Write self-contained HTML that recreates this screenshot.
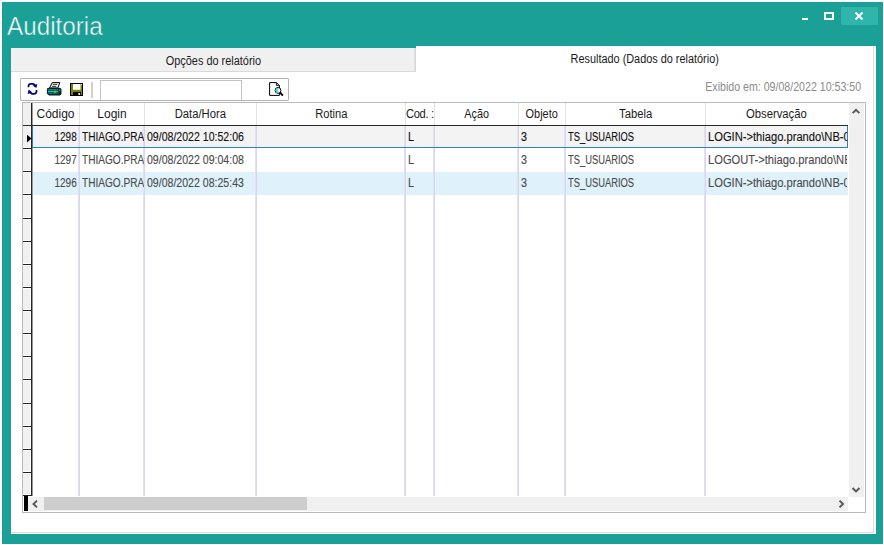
<!DOCTYPE html>
<html><head><meta charset="utf-8"><style>
html,body{margin:0;padding:0;width:884px;height:545px;overflow:hidden;background:#fff;position:relative}
.b,.t{position:absolute;font-family:"Liberation Sans", sans-serif;white-space:nowrap}
.g{-webkit-text-stroke:0.12px currentColor}
</style></head><body>
<div style="position:absolute;left:2px;top:2px;width:881px;height:542px;background:#1ba098"></div>
<div class="b " style="left:7px;top:12px;font-size:25px;line-height:28px;color:#fff;-webkit-text-stroke:0.5px #1ba098;transform:translateY(-0.3px)"><span style="display:inline-block;transform:scaleX(0.97);transform-origin:0 0">Auditoria</span></div>
<div style="position:absolute;left:841px;top:7px;width:37px;height:18px;background:#30b5ad"></div>
<svg style="position:absolute;left:0;top:0" width="884" height="40"><path d="M855.5 12.5 L862.5 19.5 M862.5 12.5 L855.5 19.5" stroke="#fff" stroke-width="2" fill="none"/><rect x="825" y="13" width="8" height="6" stroke="#fff" stroke-width="2" fill="none"/><rect x="802" y="18" width="6" height="2" fill="#fff"/></svg>
<div style="position:absolute;left:11px;top:48px;width:865px;height:486px;background:#fff"></div>
<div style="position:absolute;left:416px;top:46px;width:460px;height:2px;background:#fff"></div>
<div style="position:absolute;left:873px;top:46px;width:1px;height:487px;background:#e2dede"></div>
<div style="position:absolute;left:11px;top:532px;width:863px;height:1px;background:#e2dede"></div>
<div style="position:absolute;left:11px;top:48px;width:404px;height:23px;background:#f0f0f0;border-right:1px solid #d6d6d6;border-bottom:1px solid #d9d9d9"></div>
<div style="position:absolute;left:414px;top:48px;width:1px;height:23px;background:#e4e4e4"></div>
<div class="b " style="left:11px;width:405px;text-align:center;top:53px;overflow:hidden;font-size:12px;line-height:16px;color:#1a1a1a;"><span style="display:inline-block;transform:scaleX(0.91);transform-origin:50% 0">Opções do relatório</span></div>
<div class="b " style="left:416px;width:458px;text-align:center;top:51px;overflow:hidden;font-size:12px;line-height:16px;color:#1a1a1a;"><span style="display:inline-block;transform:scaleX(0.907);transform-origin:50% 0">Resultado (Dados do relatório)</span></div>
<div style="position:absolute;left:20px;top:78px;width:267px;height:21px;border:1px solid #b3b3b3;border-radius:1px;background:#fff"></div>
<div style="position:absolute;left:100px;top:80px;width:140px;height:19px;border-left:1px solid #c2c2c8;border-top:1px solid #c2c2c8;border-right:1px solid #c2c2c8"></div>
<div class="b " style="left:561px;width:300px;text-align:right;top:79px;font-size:12px;line-height:16px;color:#8a8a8a;"><span style="display:inline-block;transform:scaleX(0.885);transform-origin:100% 0">Exibido em: 09/08/2022 10:53:50</span></div>
<div style="position:absolute;left:22px;top:102px;width:842px;height:409px;border:1px solid #b9b9c0;background:#fff"></div>
<div style="position:absolute;left:23px;top:103px;width:8px;height:393px;background:#f0f0f0"></div>
<div style="position:absolute;left:79px;top:103px;width:1px;height:22px;background:#e3e3e3"></div>
<div style="position:absolute;left:144px;top:103px;width:1px;height:22px;background:#e3e3e3"></div>
<div style="position:absolute;left:256px;top:103px;width:1px;height:22px;background:#e3e3e3"></div>
<div style="position:absolute;left:405px;top:103px;width:1px;height:22px;background:#e3e3e3"></div>
<div style="position:absolute;left:434px;top:103px;width:1px;height:22px;background:#e3e3e3"></div>
<div style="position:absolute;left:518px;top:103px;width:1px;height:22px;background:#e3e3e3"></div>
<div style="position:absolute;left:565px;top:103px;width:1px;height:22px;background:#e3e3e3"></div>
<div style="position:absolute;left:705px;top:103px;width:1px;height:22px;background:#e3e3e3"></div>
<div style="position:absolute;left:79px;top:126px;width:1px;height:370px;background:#d8d2f0"></div>
<div style="position:absolute;left:144px;top:126px;width:1px;height:370px;background:#d8d2f0"></div>
<div style="position:absolute;left:256px;top:126px;width:1px;height:370px;background:#d8d2f0"></div>
<div style="position:absolute;left:405px;top:126px;width:1px;height:370px;background:#d8d2f0"></div>
<div style="position:absolute;left:434px;top:126px;width:1px;height:370px;background:#d8d2f0"></div>
<div style="position:absolute;left:518px;top:126px;width:1px;height:370px;background:#d8d2f0"></div>
<div style="position:absolute;left:565px;top:126px;width:1px;height:370px;background:#d8d2f0"></div>
<div style="position:absolute;left:705px;top:126px;width:1px;height:370px;background:#d8d2f0"></div>
<div style="position:absolute;left:31px;top:103px;width:1px;height:393px;background:#262626"></div>
<div style="position:absolute;left:32px;top:103px;width:1px;height:393px;background:#9a9a9a"></div>
<div style="position:absolute;left:30px;top:126px;width:1px;height:370px;background:#fff"></div>
<div style="position:absolute;left:23px;top:125px;width:825px;height:1px;background:#2a2a2a"></div>
<div style="position:absolute;left:32px;top:126px;width:816px;height:22px;background:#f3f3f3"></div>
<div style="position:absolute;left:33px;top:172px;width:815px;height:23px;background:#dff2fb"></div>
<div style="position:absolute;left:78px;top:126px;width:1px;height:370px;background:#e4e0f3"></div>
<div style="position:absolute;left:79px;top:126px;width:1px;height:370px;background:#d9d4ef"></div>
<div style="position:absolute;left:143px;top:126px;width:1px;height:370px;background:#e4e0f3"></div>
<div style="position:absolute;left:144px;top:126px;width:1px;height:370px;background:#d9d4ef"></div>
<div style="position:absolute;left:255px;top:126px;width:1px;height:370px;background:#e4e0f3"></div>
<div style="position:absolute;left:256px;top:126px;width:1px;height:370px;background:#d9d4ef"></div>
<div style="position:absolute;left:404px;top:126px;width:1px;height:370px;background:#e4e0f3"></div>
<div style="position:absolute;left:405px;top:126px;width:1px;height:370px;background:#d9d4ef"></div>
<div style="position:absolute;left:433px;top:126px;width:1px;height:370px;background:#e4e0f3"></div>
<div style="position:absolute;left:434px;top:126px;width:1px;height:370px;background:#d9d4ef"></div>
<div style="position:absolute;left:517px;top:126px;width:1px;height:370px;background:#e4e0f3"></div>
<div style="position:absolute;left:518px;top:126px;width:1px;height:370px;background:#d9d4ef"></div>
<div style="position:absolute;left:564px;top:126px;width:1px;height:370px;background:#e4e0f3"></div>
<div style="position:absolute;left:565px;top:126px;width:1px;height:370px;background:#d9d4ef"></div>
<div style="position:absolute;left:704px;top:126px;width:1px;height:370px;background:#e4e0f3"></div>
<div style="position:absolute;left:705px;top:126px;width:1px;height:370px;background:#d9d4ef"></div>
<div style="position:absolute;left:32px;top:126px;width:815px;height:21px;border-left:1px solid #2b7fd6;border-right:1px solid #2b7fd6;border-bottom:1px solid #2b7fd6;width:814px"></div>
<div style="position:absolute;left:23px;top:147px;width:7px;height:1px;background:#fff"></div>
<div style="position:absolute;left:23px;top:148px;width:8px;height:1px;background:#222"></div>
<div style="position:absolute;left:23px;top:149px;width:7px;height:1px;background:#fff"></div>
<div style="position:absolute;left:23px;top:170px;width:7px;height:1px;background:#fff"></div>
<div style="position:absolute;left:23px;top:171px;width:8px;height:1px;background:#222"></div>
<div style="position:absolute;left:23px;top:172px;width:7px;height:1px;background:#fff"></div>
<div style="position:absolute;left:23px;top:193px;width:7px;height:1px;background:#fff"></div>
<div style="position:absolute;left:23px;top:194px;width:8px;height:1px;background:#222"></div>
<div style="position:absolute;left:23px;top:195px;width:7px;height:1px;background:#fff"></div>
<div style="position:absolute;left:23px;top:217px;width:7px;height:1px;background:#fff"></div>
<div style="position:absolute;left:23px;top:218px;width:8px;height:1px;background:#222"></div>
<div style="position:absolute;left:23px;top:219px;width:7px;height:1px;background:#fff"></div>
<div style="position:absolute;left:23px;top:240px;width:7px;height:1px;background:#fff"></div>
<div style="position:absolute;left:23px;top:241px;width:8px;height:1px;background:#222"></div>
<div style="position:absolute;left:23px;top:242px;width:7px;height:1px;background:#fff"></div>
<div style="position:absolute;left:23px;top:263px;width:7px;height:1px;background:#fff"></div>
<div style="position:absolute;left:23px;top:264px;width:8px;height:1px;background:#222"></div>
<div style="position:absolute;left:23px;top:265px;width:7px;height:1px;background:#fff"></div>
<div style="position:absolute;left:23px;top:286px;width:7px;height:1px;background:#fff"></div>
<div style="position:absolute;left:23px;top:287px;width:8px;height:1px;background:#222"></div>
<div style="position:absolute;left:23px;top:288px;width:7px;height:1px;background:#fff"></div>
<div style="position:absolute;left:23px;top:309px;width:7px;height:1px;background:#fff"></div>
<div style="position:absolute;left:23px;top:310px;width:8px;height:1px;background:#222"></div>
<div style="position:absolute;left:23px;top:311px;width:7px;height:1px;background:#fff"></div>
<div style="position:absolute;left:23px;top:332px;width:7px;height:1px;background:#fff"></div>
<div style="position:absolute;left:23px;top:333px;width:8px;height:1px;background:#222"></div>
<div style="position:absolute;left:23px;top:334px;width:7px;height:1px;background:#fff"></div>
<div style="position:absolute;left:23px;top:355px;width:7px;height:1px;background:#fff"></div>
<div style="position:absolute;left:23px;top:356px;width:8px;height:1px;background:#222"></div>
<div style="position:absolute;left:23px;top:357px;width:7px;height:1px;background:#fff"></div>
<div style="position:absolute;left:23px;top:378px;width:7px;height:1px;background:#fff"></div>
<div style="position:absolute;left:23px;top:379px;width:8px;height:1px;background:#222"></div>
<div style="position:absolute;left:23px;top:380px;width:7px;height:1px;background:#fff"></div>
<div style="position:absolute;left:23px;top:402px;width:7px;height:1px;background:#fff"></div>
<div style="position:absolute;left:23px;top:403px;width:8px;height:1px;background:#222"></div>
<div style="position:absolute;left:23px;top:404px;width:7px;height:1px;background:#fff"></div>
<div style="position:absolute;left:23px;top:425px;width:7px;height:1px;background:#fff"></div>
<div style="position:absolute;left:23px;top:426px;width:8px;height:1px;background:#222"></div>
<div style="position:absolute;left:23px;top:427px;width:7px;height:1px;background:#fff"></div>
<div style="position:absolute;left:23px;top:448px;width:7px;height:1px;background:#fff"></div>
<div style="position:absolute;left:23px;top:449px;width:8px;height:1px;background:#222"></div>
<div style="position:absolute;left:23px;top:450px;width:7px;height:1px;background:#fff"></div>
<div style="position:absolute;left:23px;top:471px;width:7px;height:1px;background:#fff"></div>
<div style="position:absolute;left:23px;top:472px;width:8px;height:1px;background:#222"></div>
<div style="position:absolute;left:23px;top:473px;width:7px;height:1px;background:#fff"></div>
<div style="position:absolute;left:23px;top:494px;width:7px;height:1px;background:#fff"></div>
<div style="position:absolute;left:23px;top:495px;width:8px;height:1px;background:#222"></div>
<div style="position:absolute;left:23px;top:496px;width:7px;height:1px;background:#fff"></div>
<svg style="position:absolute;left:26px;top:134px" width="7" height="10"><path d="M1 0.8 L5.6 4.6 L1 8.4 Z" fill="#000"/></svg>
<div class="b " style="left:32px;width:47px;text-align:center;top:106px;overflow:hidden;font-size:12px;line-height:16px;color:#1a1a1a;"><span style="display:inline-block;transform:scaleX(1.0);transform-origin:50% 0">Código</span></div>
<div class="b " style="left:80px;width:64px;text-align:center;top:106px;overflow:hidden;font-size:12px;line-height:16px;color:#1a1a1a;"><span style="display:inline-block;transform:scaleX(1.0);transform-origin:50% 0">Login</span></div>
<div class="b " style="left:145px;width:111px;text-align:center;top:106px;overflow:hidden;font-size:12px;line-height:16px;color:#1a1a1a;"><span style="display:inline-block;transform:scaleX(0.94);transform-origin:50% 0">Data/Hora</span></div>
<div class="b " style="left:257px;width:148px;text-align:center;top:106px;overflow:hidden;font-size:12px;line-height:16px;color:#1a1a1a;"><span style="display:inline-block;transform:scaleX(0.93);transform-origin:50% 0">Rotina</span></div>
<div class="b " style="left:435px;width:83px;text-align:center;top:106px;overflow:hidden;font-size:12px;line-height:16px;color:#1a1a1a;"><span style="display:inline-block;transform:scaleX(0.9);transform-origin:50% 0">Ação</span></div>
<div class="b " style="left:519px;width:46px;text-align:center;top:106px;overflow:hidden;font-size:12px;line-height:16px;color:#1a1a1a;"><span style="display:inline-block;transform:scaleX(0.91);transform-origin:50% 0">Objeto</span></div>
<div class="b " style="left:566px;width:139px;text-align:center;top:106px;overflow:hidden;font-size:12px;line-height:16px;color:#1a1a1a;"><span style="display:inline-block;transform:scaleX(0.94);transform-origin:50% 0">Tabela</span></div>
<div class="b " style="left:706px;width:141px;text-align:center;top:106px;overflow:hidden;font-size:12px;line-height:16px;color:#1a1a1a;"><span style="display:inline-block;transform:scaleX(0.94);transform-origin:50% 0">Observação</span></div>
<div class="b " style="left:406px;top:106px;width:28px;overflow:hidden;font-size:12px;line-height:16px;color:#1a1a1a;letter-spacing:-0.35px"><span style="display:inline-block;transform:scaleX(0.93);transform-origin:0 0">Cod. :</span></div>
<div class="b g" style="left:-223px;width:300px;text-align:right;top:129px;font-size:12px;line-height:16px;color:#111;"><span style="display:inline-block;transform:scaleX(0.83);transform-origin:100% 0">1298</span></div>
<div class="b g" style="left:82px;top:129px;width:62px;overflow:hidden;font-size:12px;line-height:16px;color:#111;"><span style="display:inline-block;transform:scaleX(0.84);transform-origin:0 0">THIAGO.PRANDO</span></div>
<div class="b g" style="left:147px;top:129px;width:109px;overflow:hidden;font-size:12px;line-height:16px;color:#111;"><span style="display:inline-block;transform:scaleX(0.88);transform-origin:0 0">09/08/2022 10:52:06</span></div>
<div class="b g" style="left:408px;top:129px;width:26px;overflow:hidden;font-size:12px;line-height:16px;color:#111;"><span style="display:inline-block;transform:scaleX(0.9);transform-origin:0 0">L</span></div>
<div class="b g" style="left:521px;top:129px;width:44px;overflow:hidden;font-size:12px;line-height:16px;color:#111;"><span style="display:inline-block;transform:scaleX(0.9);transform-origin:0 0">3</span></div>
<div class="b g" style="left:568px;top:129px;width:137px;overflow:hidden;font-size:12px;line-height:16px;color:#111;"><span style="display:inline-block;transform:scaleX(0.78);transform-origin:0 0">TS_USUARIOS</span></div>
<div class="b g" style="left:708px;top:129px;width:139px;overflow:hidden;font-size:12px;line-height:16px;color:#111;"><span style="display:inline-block;transform:scaleX(0.93);transform-origin:0 0">LOGIN->thiago.prando\NB-0001</span></div>
<div class="b g" style="left:-223px;width:300px;text-align:right;top:152px;font-size:12px;line-height:16px;color:#4a4a4a;"><span style="display:inline-block;transform:scaleX(0.83);transform-origin:100% 0">1297</span></div>
<div class="b g" style="left:82px;top:152px;width:62px;overflow:hidden;font-size:12px;line-height:16px;color:#4a4a4a;"><span style="display:inline-block;transform:scaleX(0.84);transform-origin:0 0">THIAGO.PRANDO</span></div>
<div class="b g" style="left:147px;top:152px;width:109px;overflow:hidden;font-size:12px;line-height:16px;color:#4a4a4a;"><span style="display:inline-block;transform:scaleX(0.88);transform-origin:0 0">09/08/2022 09:04:08</span></div>
<div class="b g" style="left:408px;top:152px;width:26px;overflow:hidden;font-size:12px;line-height:16px;color:#4a4a4a;"><span style="display:inline-block;transform:scaleX(0.9);transform-origin:0 0">L</span></div>
<div class="b g" style="left:521px;top:152px;width:44px;overflow:hidden;font-size:12px;line-height:16px;color:#4a4a4a;"><span style="display:inline-block;transform:scaleX(0.9);transform-origin:0 0">3</span></div>
<div class="b g" style="left:568px;top:152px;width:137px;overflow:hidden;font-size:12px;line-height:16px;color:#4a4a4a;"><span style="display:inline-block;transform:scaleX(0.78);transform-origin:0 0">TS_USUARIOS</span></div>
<div class="b g" style="left:708px;top:152px;width:139px;overflow:hidden;font-size:12px;line-height:16px;color:#4a4a4a;"><span style="display:inline-block;transform:scaleX(0.93);transform-origin:0 0">LOGOUT->thiago.prando\NB-0001</span></div>
<div class="b g" style="left:-223px;width:300px;text-align:right;top:175px;font-size:12px;line-height:16px;color:#4a4a4a;"><span style="display:inline-block;transform:scaleX(0.83);transform-origin:100% 0">1296</span></div>
<div class="b g" style="left:82px;top:175px;width:62px;overflow:hidden;font-size:12px;line-height:16px;color:#4a4a4a;"><span style="display:inline-block;transform:scaleX(0.84);transform-origin:0 0">THIAGO.PRANDO</span></div>
<div class="b g" style="left:147px;top:175px;width:109px;overflow:hidden;font-size:12px;line-height:16px;color:#4a4a4a;"><span style="display:inline-block;transform:scaleX(0.88);transform-origin:0 0">09/08/2022 08:25:43</span></div>
<div class="b g" style="left:408px;top:175px;width:26px;overflow:hidden;font-size:12px;line-height:16px;color:#4a4a4a;"><span style="display:inline-block;transform:scaleX(0.9);transform-origin:0 0">L</span></div>
<div class="b g" style="left:521px;top:175px;width:44px;overflow:hidden;font-size:12px;line-height:16px;color:#4a4a4a;"><span style="display:inline-block;transform:scaleX(0.9);transform-origin:0 0">3</span></div>
<div class="b g" style="left:568px;top:175px;width:137px;overflow:hidden;font-size:12px;line-height:16px;color:#4a4a4a;"><span style="display:inline-block;transform:scaleX(0.78);transform-origin:0 0">TS_USUARIOS</span></div>
<div class="b g" style="left:708px;top:175px;width:139px;overflow:hidden;font-size:12px;line-height:16px;color:#4a4a4a;"><span style="display:inline-block;transform:scaleX(0.93);transform-origin:0 0">LOGIN->thiago.prando\NB-0001</span></div>
<div style="position:absolute;left:849px;top:103px;width:15px;height:394px;background:#f0f0f0"></div>
<svg style="position:absolute;left:848px;top:103px" width="16" height="394"><path d="M4.7 10.2 L8 6.9 L11.3 10.2" stroke="#555" stroke-width="1.9" fill="none"/><path d="M4.5 385 L8 388.5 L11.5 385" stroke="#555" stroke-width="1.9" fill="none"/></svg>
<div style="position:absolute;left:28px;top:497px;width:820px;height:14px;background:#f0f0f0"></div>
<div style="position:absolute;left:44px;top:497px;width:263px;height:13px;background:#cdcdcd"></div>
<div style="position:absolute;left:24px;top:496px;width:4px;height:15px;background:#000"></div>
<svg style="position:absolute;left:28px;top:497px" width="820" height="14"><path d="M9 3.6 L5.5 7 L9 10.4" stroke="#555" stroke-width="1.9" fill="none"/><path d="M811.5 3.6 L815 7 L811.5 10.4" stroke="#555" stroke-width="1.9" fill="none"/></svg>
<svg style="position:absolute;left:0;top:0" width="300" height="100"><path d="M28.5 87.3 V86.2 Q28.5 83.9 31 83.9 H32.8 Q34.2 83.9 34.8 85.2" stroke="#000080" stroke-width="1.7" fill="none"/><path d="M32.6 85.6 L37.4 84.1 L36.3 87.9 Z" fill="#000080"/><path d="M36.5 90 V91.3 Q36.5 93.8 34 93.8 H32.2 Q30.8 93.8 30.2 92.5" stroke="#000080" stroke-width="1.7" fill="none"/><path d="M32.4 92.4 L27.6 93.9 L28.7 89.6 Z" fill="#000080"/><path d="M52.2 82.6 L59.8 82.6 L57.8 88 L49.6 88 Z" fill="#f2f2f2" stroke="#000" stroke-width="1"/><path d="M52.8 84.4 H57.2 M52 86.4 H56.2" stroke="#333" stroke-width="1"/><path d="M47.6 88.4 L60.6 88.4 L61 89.5 L61 94 L60 95 L48.8 95 L47.4 93.6 L47.4 89.6 Z" fill="#005a5a" stroke="#000" stroke-width="0.9"/><path d="M48.4 89.6 H57.5" stroke="#0a8a8a" stroke-width="0.9"/><path d="M48 91.5 H58.6" stroke="#12c4c4" stroke-width="1.1"/><rect x="53.8" y="90.7" width="2.3" height="2" fill="#c8a400"/><path d="M48.4 93.4 H57" stroke="#0a6e6e" stroke-width="0.9"/><path d="M58 88.8 L60.6 88.4 L61 89.6 L60.8 93.5 L58.6 94.8 Z" fill="#003838"/><path d="M59.6 89.2 V91" stroke="#0fb0b0" stroke-width="0.9"/><rect x="70" y="83" width="13" height="13" fill="#000"/><rect x="71" y="84" width="11" height="11" fill="#808000"/><rect x="73" y="84" width="7.5" height="5.8" fill="#fff"/><rect x="73" y="92" width="8" height="3.2" fill="#000"/><circle cx="79.2" cy="94" r="1.1" fill="#fff"/><rect x="81" y="84" width="1" height="1" fill="#fff"/><rect x="91" y="82" width="2" height="16" fill="#cfcfcf"/><path d="M269.6 82.6 H276.4 L279.4 85.6 V95.4 H269.6 Z" fill="#fff" stroke="#000" stroke-width="1"/><path d="M276.4 82.6 V85.4 H279.4" stroke="#000" stroke-width="0.9" fill="none"/><circle cx="278" cy="90.4" r="2.9" fill="#fff" stroke="#000" stroke-width="1"/><path d="M278 87.9 A2.5 2.5 0 0 0 278 92.9 Z" fill="#22e4ee"/><path d="M278.3 88.2 L277.6 90.4 L278.6 92.4" stroke="#f0c8c8" stroke-width="0.7" fill="none"/><path d="M280 92.4 L282.8 95.6" stroke="#000" stroke-width="1.9"/></svg>
</body></html>
